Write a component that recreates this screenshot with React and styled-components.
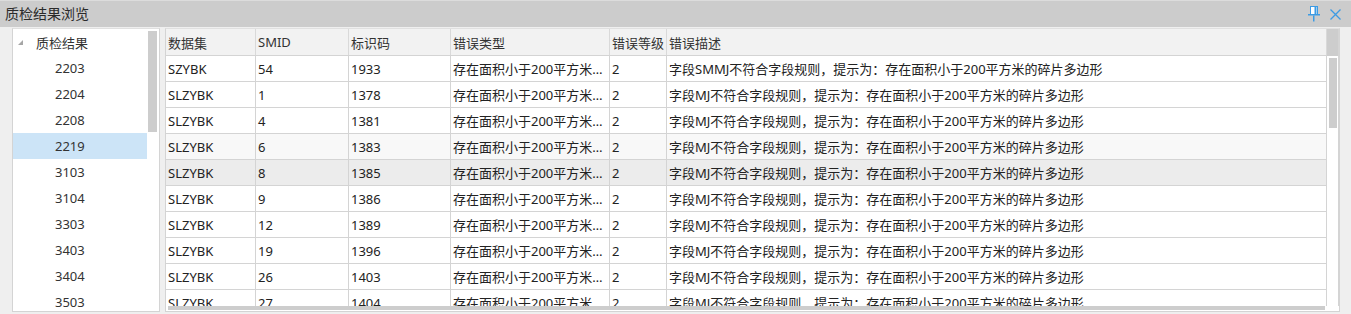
import React from "react";
import styled, { createGlobalStyle } from "styled-components";

const Global = createGlobalStyle`
  html, body { margin: 0; padding: 0; background: #efefef; }
  body { font-family: "Noto Sans", "Noto Sans CJK SC", sans-serif; }
  * { box-sizing: border-box; }
`;

const Window = styled.div`
  width: 1351px;
  height: 314px;
  overflow: hidden;
  display: flex;
  flex-direction: column;
  background: #efefef;
  color: #222;
  font-size: 13px;
`;

const TitleBar = styled.div`
  height: 27px;
  flex: none;
  display: flex;
  align-items: center;
  padding: 0 6px 0 5px;
  background: #cccccc;
  border-top: 1px solid #dcdcdc;
`;

const Title = styled.div`
  flex: 1;
  font-size: 14px;
  color: #2a2a2a;
  line-height: 26px;
`;

const IconBtn = styled.div`
  width: 20px;
  height: 20px;
  display: flex;
  align-items: center;
  justify-content: center;
  margin-left: ${(p) => p.$gap || 0}px;
`;

const Body = styled.div`
  flex: 1;
  display: flex;
  padding: 1px 0 2px 12px;
  min-height: 0;
`;

const TreePanel = styled.div`
  width: 148px;
  flex: none;
  background: #fff;
  border: 1px solid #d4d4d4;
  border-top-color: #e0e0e0;
  display: flex;
  overflow: hidden;
`;

const TreeList = styled.div`
  width: 134px;
  display: flex;
  flex-direction: column;
`;

const TreeRow = styled.div`
  height: 26px;
  flex: none;
  display: flex;
  align-items: center;
  padding-left: ${(p) => p.$indent}px;
  background: ${(p) => (p.$selected ? "#cce4f7" : "transparent")};
  color: #333;
  white-space: nowrap;
`;

const Expander = styled.span`
  width: 0;
  height: 0;
  border-left: 5px solid transparent;
  border-bottom: 5px solid #a6a6a6;
  margin-right: 13px;
  margin-top: 1px;
`;

const VScroll = styled.div`
  width: 12px;
  flex: none;
  padding: ${(p) => p.$top}px 1px 0 1px;
`;

const Thumb = styled.div`
  background: #cdcdcd;
  width: ${(p) => p.$w}px;
  height: ${(p) => p.$h}px;
`;

const Splitter = styled.div`
  width: 5px;
  flex: none;
`;

const GridPanel = styled.div`
  width: 1175px;
  flex: none;
  display: flex;
  flex-direction: column;
  border: 1px solid #d4d4d4;
  border-top-color: #e0e0e0;
  background: #fff;
  overflow: hidden;
`;

const GridMain = styled.div`
  flex: 1;
  display: flex;
  min-height: 0;
`;

const GridTable = styled.div`
  width: 1161px;
  flex: none;
  display: flex;
  flex-direction: column;
  overflow: hidden;
`;

const cols = "90px 93px 102px 159px 57px 660px";

const HeaderRow = styled.div`
  display: grid;
  grid-template-columns: ${cols};
  height: 27px;
  flex: none;
  background: #f2f2f2;
  border-bottom: 1px solid #d4d4d4;
`;

const HeaderCell = styled.div`
  border-right: 1px solid #d9d9d9;
  padding-left: 2px;
  display: flex;
  align-items: center;
  color: #333;
  white-space: nowrap;
  overflow: hidden;
`;

const Rows = styled.div`
  flex: 1;
  overflow: hidden;
  min-height: 0;
`;

const Row = styled.div`
  display: grid;
  grid-template-columns: ${cols};
  height: 26px;
  background: ${(p) => p.$bg};
  border-bottom: 1px solid #d4d4d4;
`;

const Cell = styled.div`
  border-right: 1px solid #d4d4d4;
  padding: 0 2px;
  display: flex;
  align-items: center;
  white-space: nowrap;
  overflow: hidden;
  color: #222;
  min-width: 0;
`;

const Ellipsis = styled.span`
  overflow: hidden;
  text-overflow: ellipsis;
  white-space: nowrap;
  display: block;
  min-width: 0;
  max-width: 100%;
`;

const GridVScroll = styled.div`
  width: 12px;
  flex: none;
  display: flex;
  flex-direction: column;
  border-right: 1px solid #d4d4d4;
`;

const Corner = styled.div`
  height: 27px;
  flex: none;
  background: #cdcdcd;
`;

const VTrack = styled.div`
  flex: 1;
  padding: 2px 0 0 2px;
  background: #fff;
`;

const HScroll = styled.div`
  height: 5px;
  flex: none;
  display: flex;
  padding-left: 2px;
`;

const HThumb = styled.div`
  width: 1157px;
  height: 4px;
  background: #cdcdcd;
`;

const RightGutter = styled.div`
  flex: 1;
`;

const treeItems = ["2203", "2204", "2208", "2219", "3103", "3104", "3303", "3403", "3404", "3503", "3504"];

const rows = [
  ["SZYBK", "54", "1933", "SMMJ"],
  ["SLZYBK", "1", "1378", "MJ"],
  ["SLZYBK", "4", "1381", "MJ"],
  ["SLZYBK", "6", "1383", "MJ"],
  ["SLZYBK", "8", "1385", "MJ"],
  ["SLZYBK", "9", "1386", "MJ"],
  ["SLZYBK", "12", "1389", "MJ"],
  ["SLZYBK", "19", "1396", "MJ"],
  ["SLZYBK", "26", "1403", "MJ"],
  ["SLZYBK", "27", "1404", "MJ"],
];

const headers = ["数据集", "SMID", "标识码", "错误类型", "错误等级", "错误描述"];

function rowBg(i) {
  if (i === 4) return "#ececec";
  if (i === 3) return "#f8f8f8";
  return "#ffffff";
}

export default function App() {
  return (
    <>
      <Global />
      <Window>
        <TitleBar>
          <Title>质检结果浏览</Title>
          <IconBtn>
            <svg width="14" height="16" viewBox="0 0 14 16">
              <rect x="3.5" y="0.5" width="7" height="8" fill="#fff" stroke="#3c9be4" />
              <rect x="7.5" y="1" width="2" height="7" fill="#3c9be4" />
              <rect x="1" y="8" width="12" height="1.5" fill="#3c9be4" />
              <rect x="6" y="9.5" width="1.5" height="6" fill="#3c9be4" />
            </svg>
          </IconBtn>
          <IconBtn $gap={1}>
            <svg width="13" height="13" viewBox="0 0 13 13">
              <path d="M1.5 1.5 L11.5 11.5 M11.5 1.5 L1.5 11.5" stroke="#3c9be4" strokeWidth="1.3" fill="none" />
            </svg>
          </IconBtn>
        </TitleBar>
        <Body>
          <TreePanel>
            <TreeList>
              <TreeRow $indent={5}>
                <Expander />
                质检结果
              </TreeRow>
              {treeItems.map((t) => (
                <TreeRow key={t} $indent={42} $selected={t === "2219"}>
                  {t}
                </TreeRow>
              ))}
            </TreeList>
            <VScroll $top={2}>
              <Thumb $w={9} $h={101} />
            </VScroll>
          </TreePanel>
          <Splitter />
          <GridPanel>
            <GridMain>
              <GridTable>
                <HeaderRow>
                  {headers.map((h) => (
                    <HeaderCell key={h}>{h}</HeaderCell>
                  ))}
                </HeaderRow>
                <Rows>
                  {rows.map((r, i) => (
                    <Row key={i} $bg={rowBg(i)}>
                      <Cell>{r[0]}</Cell>
                      <Cell>{r[1]}</Cell>
                      <Cell>{r[2]}</Cell>
                      <Cell>
                        <Ellipsis>存在面积小于200平方米的碎片多边形</Ellipsis>
                      </Cell>
                      <Cell>2</Cell>
                      <Cell>字段{r[3]}不符合字段规则，提示为：存在面积小于200平方米的碎片多边形</Cell>
                    </Row>
                  ))}
                </Rows>
              </GridTable>
              <GridVScroll>
                <Corner />
                <VTrack>
                  <Thumb $w={8} $h={70} />
                </VTrack>
              </GridVScroll>
            </GridMain>
            <HScroll>
              <HThumb />
            </HScroll>
          </GridPanel>
          <RightGutter />
        </Body>
      </Window>
    </>
  );
}
